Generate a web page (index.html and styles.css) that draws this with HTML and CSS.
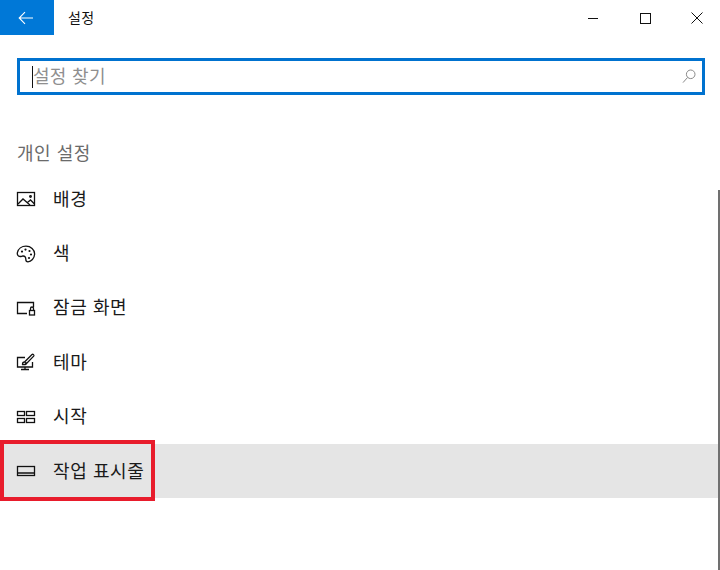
FILE: index.html
```html
<!DOCTYPE html>
<html lang="ko">
<head>
  <meta charset="UTF-8">
  <title>설정</title>
  <link rel="stylesheet" href="styles.css">
</head>
<body>
  <div class="window">
    <div class="titlebar">
      <div class="back-button">
        <svg width="16" height="14" viewBox="0 0 16 14" fill="none" stroke="#fff" stroke-width="1.100"><path d="M15 7H1.500M7 1.200 1.200 7 7 12.800"/></svg>
      </div>
      <div class="title">설정</div>
      <div class="window-buttons">
        <svg width="12" height="12" viewBox="0 0 12 12" stroke="#111" stroke-width="1"><path d="M1 6.500h10"/></svg>
        <svg width="12" height="12" viewBox="0 0 12 12" fill="none" stroke="#111" stroke-width="1"><rect x="1.500" y="1.500" width="10" height="10"/></svg>
        <svg width="12" height="12" viewBox="0 0 12 12" fill="none" stroke="#111" stroke-width="1"><path d="M.5.5l11 11M11.500.5l-11 11"/></svg>
      </div>
    </div>

    <div class="search-box">
      <span class="caret"></span>
      <span class="search-text">설정 찾기</span>
      <svg class="search-icon" width="14" height="15" viewBox="0 0 14 15" fill="none" stroke="#8a8a8a" stroke-width="1"><circle cx="8.700" cy="5.300" r="4.300"/><path d="M5.600 8.400 1 13.600"/></svg>
    </div>

    <h2 class="section-title">개인 설정</h2>

    <ul class="menu">
      <li class="menu-item">
        <svg class="menu-icon" width="20" height="16" viewBox="0 0 20 16" fill="none" stroke="#111" stroke-width="1.300"><rect x="1.500" y="1.500" width="17" height="13"/><path d="M2 13l5-5 7 6M11.500 11.500l3-2.500 4 4"/><circle cx="14.500" cy="5.500" r=".8"/></svg>
        <span>배경</span>
      </li>
      <li class="menu-item">
        <svg class="menu-icon" width="20" height="18" viewBox="0 0 20 18" fill="none" stroke="#111" stroke-width="1.300"><path d="M10 1.200c4.800 0 8.600 3.400 8.600 7.600 0 4.600-3.600 8-6.600 8-1.800 0-2.200-1.200-2.200-2.600 0-2.200-1-3.400-3-3.200-1.400.2-2.400 1-4 .2C1.400 10.300 1 9.300 1.400 7.600 2.200 4 5.600 1.200 10 1.200z"/><g fill="#111" stroke="none"><circle cx="6" cy="6.600" r="1.100"/><circle cx="9.500" cy="4.600" r="1.100"/><circle cx="13.500" cy="6" r="1.100"/><circle cx="15" cy="9.500" r="1.100"/><circle cx="13" cy="13" r="1.100"/></g></svg>
        <span>색</span>
      </li>
      <li class="menu-item">
        <svg class="menu-icon" width="20" height="16" viewBox="0 0 20 16" fill="none" stroke="#111" stroke-width="1.300"><path d="M11 13.500H1.500v-11h16v5"/><rect x="13.500" y="10.500" width="5" height="4.500"/><path d="M14.500 10.500V8.500a1.500 1.500 0 0 1 3 0v2"/></svg>
        <span>잠금 화면</span>
      </li>
      <li class="menu-item">
        <svg class="menu-icon" width="20" height="18" viewBox="0 0 20 18" fill="none" stroke="#111" stroke-width="1.300"><path d="M9 4.500H1.500v9.500h15V9M9 14v2.500M5 16.500h8"/><path d="M6.500 11.500c0-2 1-2.500 2-2.500L16 1.500c1-.8 2.500.6 1.700 1.600L10.500 10.500c0 1-2 1.500-4 1z"/><path d="M9 9.500l1.500 1" stroke-width="2"/></svg>
        <span>테마</span>
      </li>
      <li class="menu-item">
        <svg class="menu-icon" width="20" height="14" viewBox="0 0 20 14" fill="none" stroke="#111" stroke-width="1.300"><rect x="1.500" y="1.500" width="7" height="4"/><rect x="10.500" y="1.500" width="8" height="4"/><rect x="1.500" y="8.500" width="7" height="4"/><rect x="10.500" y="8.500" width="8" height="4"/></svg>
        <span>시작</span>
      </li>
      <li class="menu-item selected">
        <svg class="menu-icon" width="20" height="12" viewBox="0 0 20 12" fill="none" stroke="#111" stroke-width="1.300"><rect x="1.500" y="1.500" width="17" height="9"/><path d="M1.500 8h17" stroke-width="1.500"/></svg>
        <span>작업 표시줄</span>
      </li>
    </ul>

    <div class="scrollbar"></div>
    <div class="highlight-box"></div>
  </div>
</body>
</html>
```

FILE: styles.css
```css
* {
  box-sizing: border-box;
}

html, body {
  margin: 0;
  padding: 0;
  background-color: #fff;
}

body {
  font-family: "Noto Sans CJK KR", "Noto Sans", sans-serif;
  color: #1a1a1a;
}

.window {
  position: relative;
  width: 720px;
  height: 570px;
  overflow: hidden;
}

.titlebar {
  display: flex;
  align-items: center;
  height: 35px;
}

.back-button {
  display: flex;
  align-items: center;
  justify-content: center;
  width: 54px;
  height: 35px;
  padding-right: 2px;
  background-color: #0078d7;
}

.title {
  margin-left: 14px;
  margin-top: -2px;
  font-size: 14px;
  letter-spacing: .3px;
  color: #111;
}

.window-buttons {
  display: flex;
  align-items: center;
  gap: 40px;
  margin-left: auto;
  margin-right: 17px;
}

.search-box {
  display: flex;
  align-items: center;
  height: 37px;
  margin: 23px 15px 0 17px;
  padding: 0 12px;
  border: 3px solid #0072cf;
}

.caret {
  width: 1px;
  height: 22px;
  background-color: #111;
}

.search-text {
  font-size: 18px;
  line-height: 24px;
  margin-top: -3px;
  letter-spacing: .3px;
  color: #8f8f8f;
}

.search-icon {
  margin-left: auto;
  margin-right: -6px;
}

.section-title {
  margin: 45px 0 0 17px;
  height: 24px;
  font-size: 18px;
  line-height: 24px;
  font-weight: 400;
  letter-spacing: .5px;
  color: #6a6a6a;
}

.menu {
  list-style: none;
  margin: 8px 0 0;
  padding: 0;
}

.menu-item {
  display: flex;
  align-items: center;
  height: 54.4px;
  margin-right: 2px;
  padding-left: 16px;
  font-size: 18px;
  letter-spacing: .6px;
  color: #1a1a1a;
}

.menu-item span {
  margin-top: -3px;
}

.menu-icon {
  flex: none;
  width: 20px;
  margin-right: 17px;
}

.selected {
  background-color: #e5e5e5;
}

.scrollbar {
  position: absolute;
  top: 190px;
  right: 0;
  bottom: 0;
  width: 2px;
  background-color: #707070;
}

.highlight-box {
  position: absolute;
  left: 0;
  top: 440px;
  width: 155px;
  height: 61px;
  border: 4px solid #e81c2c;
}
```
